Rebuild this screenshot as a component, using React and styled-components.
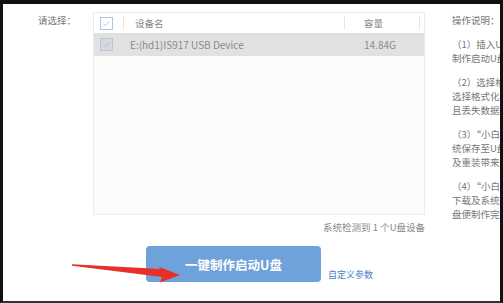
import React from 'react';
import styled, { createGlobalStyle } from 'styled-components';

const GlobalStyle = createGlobalStyle`
  html, body {
    margin: 0;
    padding: 0;
    background: #fff;
  }
  body {
    font-family: "Noto Sans CJK SC", "Noto Sans", sans-serif;
  }
`;

const Frame = styled.div`
  position: relative;
  width: 503px;
  height: 303px;
  box-sizing: border-box;
  border-top: 4px solid #111;
  border-left: 3px solid #111;
  border-right: 3px solid #111;
  border-bottom: 2px solid #333;
  background: #fff;
  overflow: hidden;
  display: flex;
`;

const LeftPane = styled.div`
  width: 422px;
  flex: none;
  display: flex;
  flex-direction: column;
  padding-top: 8px;
`;

const TopRow = styled.div`
  display: flex;
`;

const Label = styled.div`
  width: 55px;
  padding-left: 35px;
  padding-top: 1px;
  font-size: 9.5px;
  line-height: 14px;
  color: #777;
`;

const Table = styled.div`
  width: 332px;
  height: 203px;
  box-sizing: border-box;
  border: 1px solid #ebebeb;
  background: #fbfbfb;
  display: flex;
  flex-direction: column;
`;

const Row = styled.div`
  display: flex;
  align-items: center;
  height: ${({ head }) => (head ? '20px' : '23px')};
  background: ${({ head, selected }) => (head ? '#fff' : selected ? '#e1e1e1' : 'transparent')};
  font-size: 9.5px;
  color: ${({ head }) => (head ? '#888' : '#8a8a8a')};
`;

const Cell = styled.div`
  position: relative;
  box-sizing: border-box;
  width: ${({ w }) => w}px;
  flex: none;
  padding-left: ${({ pl }) => pl || 0}px;
  white-space: nowrap;
  height: 100%;
  display: flex;
  align-items: center;
  font-size: ${({ fs }) => fs || 9.5}px;
  &::after {
    content: '';
    display: ${({ sep }) => (sep ? 'block' : 'none')};
    position: absolute;
    right: 0;
    top: 3px;
    bottom: 3px;
    width: 1px;
    background: #e6e6e6;
  }
`;

const Box = styled.span`
  width: 13px;
  height: 13px;
  box-sizing: border-box;
  border: 1px solid ${({ filled }) => (filled ? '#b6c8dc' : '#abc8e8')};
  background: ${({ filled }) => (filled ? '#d5d8dc' : '#fff')};
  display: flex;
  align-items: center;
  justify-content: center;
`;

const Status = styled.div`
  margin-top: 5px;
  text-align: right;
  font-size: 9.5px;
  line-height: 14px;
  color: #888;
  white-space: nowrap;
`;

const ButtonRow = styled.div`
  display: flex;
  align-items: flex-end;
  margin-top: 12px;
  padding-left: 143px;
`;

const MakeButton = styled.button`
  width: 175px;
  height: 36px;
  border: none;
  border-radius: 4px;
  background: #6fa2db;
  color: #fff;
  font-family: "Noto Sans CJK SC", "Noto Sans", sans-serif;
  font-size: 12.5px;
  font-weight: bold;
  padding: 0;
  cursor: pointer;
`;

const LinkText = styled.a`
  margin-left: 7px;
  font-size: 9px;
  line-height: 14px;
  color: #4a7fc8;
  text-decoration: none;
  white-space: nowrap;
`;

const Notes = styled.div`
  margin-left: 27px;
  padding-top: 9px;
  font-size: 9.5px;
  line-height: 14px;
  color: #777;
  white-space: nowrap;
`;

const NoteTitle = styled.div`
  margin-bottom: 10px;
`;

const Para = styled.div`
  margin-bottom: 10px;
`;

const Arrow = styled.svg`
  position: absolute;
  left: -3px;
  top: -4px;
  pointer-events: none;
`;

function Check({ color }) {
  return (
    <svg width="9" height="9" viewBox="0 0 9 9">
      <polyline points="1.5,4.8 3.6,6.8 7.6,2.2" fill="none" stroke={color} strokeWidth="0.9" />
    </svg>
  );
}

const notes = [
  ['（1）插入U盘之后点击一键', '制作启动U盘按钮开始制作'],
  ['（2）选择格式化方式后点击', '选择格式化U盘会清空U盘数', '且丢失数据，请提前备份'],
  ['（3）“小白一键重装系统”会将系', '统保存至U盘中，避免U盘数据', '及重装带来的影响'],
  ['（4）“小白一键重装系统”会自动', '下载及系统文件，完成之后U', '盘便制作完成'],
];

export default function App() {
  return (
    <>
      <GlobalStyle />
      <Frame>
        <LeftPane>
          <TopRow>
            <Label>请选择：</Label>
            <Table>
              <Row head>
                <Cell w={30} pl={6} sep>
                  <Box><Check color="#abc8e8" /></Box>
                </Cell>
                <Cell w={221} pl={11} sep>设备名</Cell>
                <Cell w={75} pl={19} sep>容量</Cell>
              </Row>
              <Row selected>
                <Cell w={30} pl={6}>
                  <Box filled><Check color="#b0c4d8" /></Box>
                </Cell>
                <Cell w={221} pl={6} fs={10}>E:(hd1)IS917 USB Device</Cell>
                <Cell w={75} pl={19} fs={10}>14.84G</Cell>
              </Row>
            </Table>
          </TopRow>
          <Status>系统检测到 1 个U盘设备</Status>
          <ButtonRow>
            <MakeButton>一键制作启动U盘</MakeButton>
            <LinkText href="#">自定义参数</LinkText>
          </ButtonRow>
        </LeftPane>
        <Notes>
          <NoteTitle>操作说明：</NoteTitle>
          {notes.map((p, i) => (
            <Para key={i}>
              {p.map((line, j) => (
                <div key={j}>{line}</div>
              ))}
            </Para>
          ))}
        </Notes>
        <Arrow width="503" height="303" viewBox="0 0 503 303">
          <polygon
            points="72,264.3 161,269 158,266.5 180,275 160,282.5 162,277 72,265.7"
            fill="#e8302a"
          />
        </Arrow>
      </Frame>
    </>
  );
}
